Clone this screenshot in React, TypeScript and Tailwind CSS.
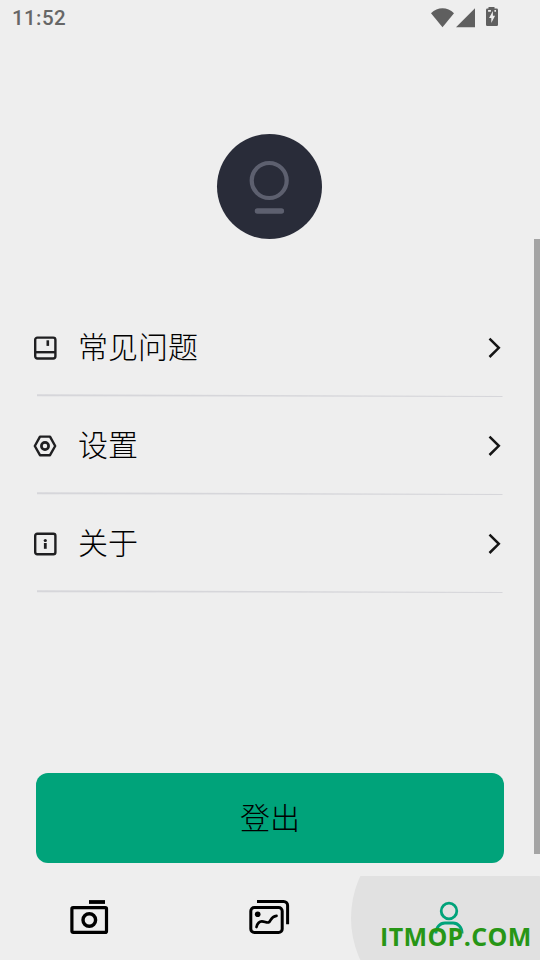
import { ReactNode, useState } from 'react';

interface MenuItem {
  id: string;
  label: string;
  icon: ReactNode;
}

interface TabItem {
  id: string;
  label: string;
  icon: ReactNode;
}

function FaqIcon() {
  return (
    <svg className="mt-0.5" width="24" height="24" viewBox="0 0 24 24" fill="none" stroke="#1f1f21" strokeWidth="2.4">
      <rect x="2.2" y="1.6" width="20.2" height="20.9" rx="2.2" />
      <path d="M2.2 16.2h20.2" />
      <path d="M14.8 4.3v5.6" strokeWidth="2.6" />
    </svg>
  );
}

function SettingsIcon() {
  return (
    <svg className="mt-0.5" width="24" height="24" viewBox="0 0 24 24" fill="none" stroke="#1f1f21" strokeWidth="2.4" strokeLinejoin="round">
      <path d="M7 2.6h10L22.2 12 17 21.2H7L1.800 12z" />
      <circle cx="12" cy="12" r="3.6" strokeWidth="2.7" />
    </svg>
  );
}

function AboutIcon() {
  return (
    <svg className="mt-0.5" width="24" height="24" viewBox="0 0 24 24" fill="none" stroke="#1f1f21" strokeWidth="2.4">
      <rect x="2.2" y="1.8" width="20.2" height="20.4" rx="2" />
      <path d="M12.3 11v5.8" strokeWidth="2.8" />
      <circle cx="12.3" cy="8.5" r="1.6" fill="#1f1f21" stroke="none" />
    </svg>
  );
}

function CameraIcon() {
  return (
    <svg width="40" height="40" viewBox="0 0 40 40" fill="none" stroke="#000" strokeWidth="3.2">
      <path d="M19 4h16" strokeWidth="3.8" />
      <rect x="1.9" y="9.6" width="34.6" height="24.8" rx="1.2" />
      <circle cx="19.3" cy="22" r="6.3" strokeWidth="3.4" />
    </svg>
  );
}

function GalleryIcon() {
  return (
    <svg className="overflow-visible" width="40" height="40" viewBox="0 0 40 40" fill="none" stroke="#000" strokeWidth="3" strokeLinecap="round">
      <rect x=".8" y="9.5" width="31.4" height="25" rx="3.6" />
      <path d="M7 3.5h26.600a4 4 0 0 1 4 4v18.700" strokeLinecap="butt" />
      <circle cx="7.7" cy="16.3" r="2.8" fill="#000" stroke="none" />
      <path d="M6.500 29c1-4 2.800-5.600 5.400-5.600 2.800 0 4.500 1.600 6.600 1 3-.8 1.500-6 8-6.600" strokeWidth="2.7" />
    </svg>
  );
}

function ProfileIcon() {
  return (
    <svg width="40" height="40" viewBox="0 0 40 40" fill="none" stroke="#00a37a" strokeWidth="2.8">
      <circle cx="19" cy="13" r="7.8" />
      <path d="M5.900 35.500c0-6 4-10.500 9-10.500h8.200c5 0 9 4.500 9 10.500" />
    </svg>
  );
}

const menuItems: MenuItem[] = [
  { id: 'faq', label: '常见问题', icon: <FaqIcon /> },
  { id: 'settings', label: '设置', icon: <SettingsIcon /> },
  { id: 'about', label: '关于', icon: <AboutIcon /> },
];

const tabs: TabItem[] = [
  { id: 'camera', label: 'camera', icon: <CameraIcon /> },
  { id: 'gallery', label: 'gallery', icon: <GalleryIcon /> },
  { id: 'profile', label: 'profile', icon: <ProfileIcon /> },
];

function StatusBar() {
  return (
    <header className="flex h-9 items-center justify-between pl-3 pr-[41px] text-[#5f5f5f]">
      <span className="font-[Roboto,sans-serif] text-[20.5px] font-medium leading-9 tracking-[0.4px] text-[#666]">
        11:52
      </span>
      <svg width="68" height="22" viewBox="0 0 68 22" fill="currentColor">
        <path d="M0 6.200C6.600-.4 16.400-.4 23 6.200L11.500 20.200z" />
        <path d="M44 1.200v19H25z" />
        <path d="M57.500 1.600V0h6v1.600h2.200q1.300 0 1.300 1.300v14.900q0 1.300-1.300 1.300h-9.400q-1.300 0-1.300-1.300V2.900q0-1.300 1.300-1.300z" />
        <path d="M61.900 4.100v4.700h2.200l-3.800 7.300v-5.200h-2.200zM57.100 3h2.800v1.700h-2.800zM63.400 3H65v1.700h-1.600z" fill="#eee" />
      </svg>
    </header>
  );
}

function Avatar() {
  return (
    <div className="flex size-[105px] items-center justify-center rounded-full bg-[#292c39]">
      <svg width="105" height="105" viewBox="0 0 105 105" fill="none" stroke="#5d606f">
        <circle cx="52.2" cy="46.5" r="17.5" strokeWidth="4.2" />
        <path d="M40.400 77h24" strokeWidth="5.4" strokeLinecap="round" />
      </svg>
    </div>
  );
}

function MenuRow({ item }: { item: MenuItem }) {
  return (
    <li className="flex h-[98px] flex-col">
      <button className="flex flex-1 items-center pl-[33px] pr-[38px] text-left">
        {item.icon}
        <span className="ml-[21px] flex-1 pb-[3px] text-[30px] font-light leading-[44px] text-black">{item.label}</span>
        <svg className="mt-0.5" width="16" height="24" viewBox="0 0 16 24" fill="none" stroke="#151515" strokeWidth="2.5">
          <path d="M3.500 2.600l9.300 9.200-9.300 9.200" />
        </svg>
      </button>
      <svg className="ml-[37px]" width="466" height="3" viewBox="0 0 466 3">
        <path d="M0 .3L465.500 2V3L0 2.200z" fill="#d6d6da" />
      </svg>
    </li>
  );
}

export default function App() {
  const [activeTab, setActiveTab] = useState('profile');

  return (
    <div className="relative flex h-[960px] w-[540px] flex-col overflow-hidden bg-[#eee] font-['Noto_Sans_CJK_SC',sans-serif]">
      <StatusBar />

      <main className="flex flex-1 flex-col">
        <div className="flex justify-center pt-[98px] pr-px">
          <Avatar />
        </div>

        <ul className="mt-[60px]">
          {menuItems.map((item) => (
            <MenuRow key={item.id} item={item} />
          ))}
        </ul>

        <button className="mx-9 mt-auto mb-[13px] h-[90px] rounded-[12px] bg-[#00a37a] pb-1 text-[30px] font-light text-black">
          登出
        </button>
      </main>

      {/* Bottom tabs */}
      <nav className="grid h-[84px] grid-cols-3 overflow-hidden">
        {tabs.map((tab) => (
          <button
            key={tab.id}
            aria-label={tab.label}
            onClick={() => setActiveTab(tab.id)}
            className="relative flex items-center justify-center"
          >
            {activeTab === tab.id && (
              <span className="absolute top-1/2 left-1/2 size-[198px] -translate-1/2 rounded-full bg-[#e1e1e1]" />
            )}
            <span className="relative">{tab.icon}</span>
          </button>
        ))}
      </nav>

      {/* Scroll thumb */}
      <div className="absolute top-[239px] right-0 h-[615px] w-1.5 bg-[#a4a4a4]" />

      {/* Site mark */}
      <span className="absolute top-[919px] left-[380px] font-['Open_Sans',sans-serif] text-[25px] font-bold leading-[34px] tracking-[0.35px] text-[#279616]">
        ITMOP.COM
      </span>
    </div>
  );
}
